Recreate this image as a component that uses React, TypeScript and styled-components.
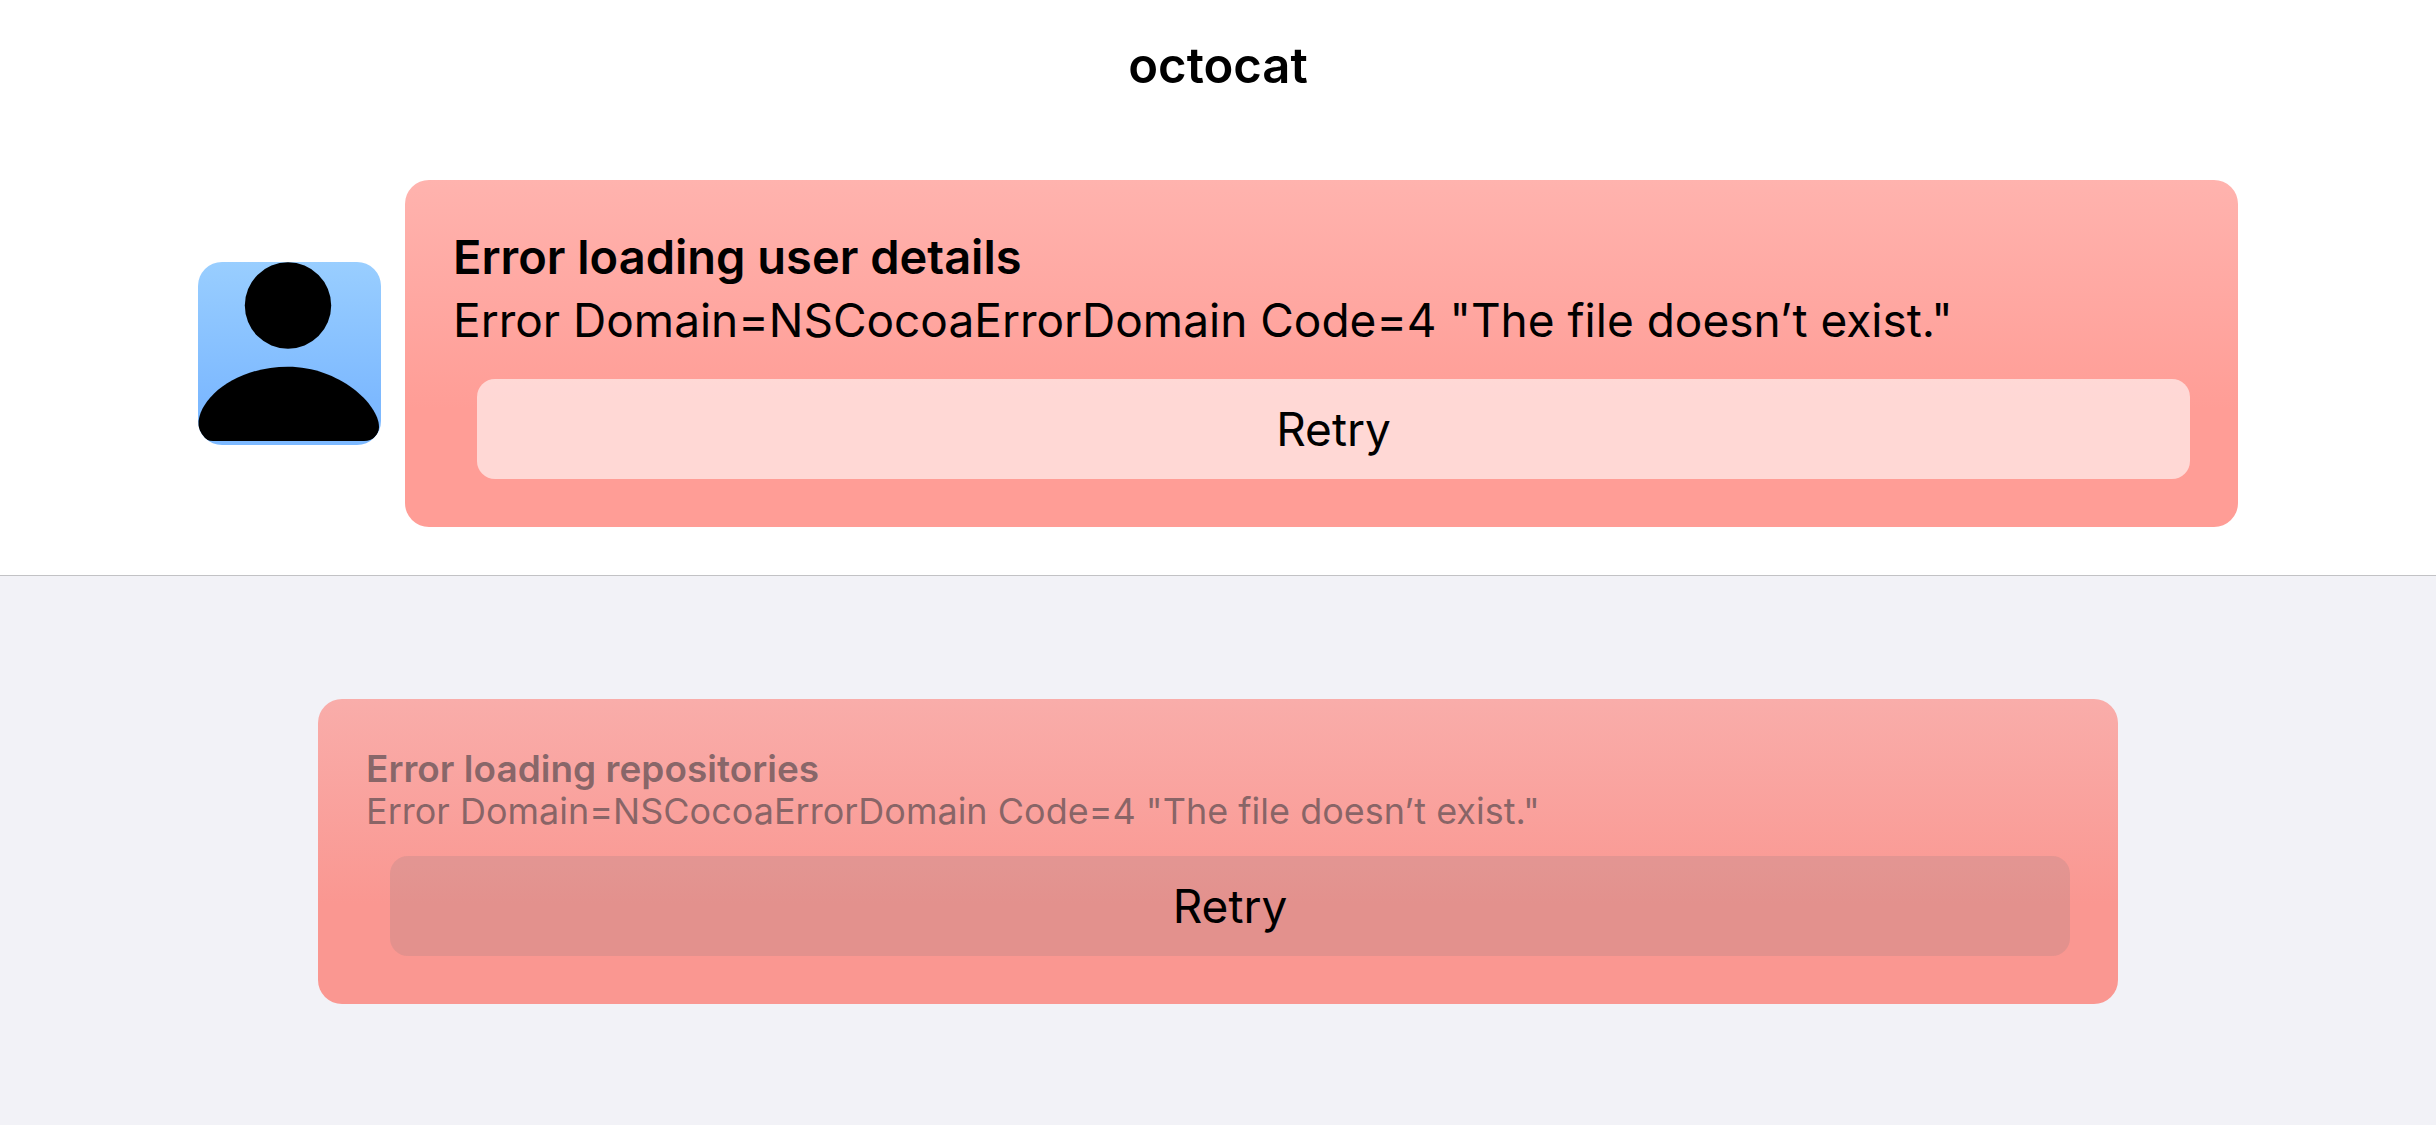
import React from "react";
import styled, { createGlobalStyle } from "styled-components";

const GlobalStyle = createGlobalStyle`
  *, *::before, *::after { box-sizing: border-box; }
  body {
    margin: 0;
    background: #f2f2f7;
    color: #000;
    font-family: Inter, "Liberation Sans", sans-serif;
  }
`;

const Header = styled.header`
  background: #fff;
  border-bottom: 1px solid #c2c2c5;
`;

const Title = styled.h1`
  margin: 0;
  font-size: 49px;
  line-height: 132px;
  font-weight: 600;
  text-align: center;
`;

const Profile = styled.section`
  display: flex;
  align-items: center;
  gap: 24px;
  padding: 48px 198px;
`;

const Avatar = styled.svg`
  flex: none;
  width: 183px;
  height: 183px;
  border-radius: 24px;
  background: linear-gradient(#99ceff, #7db9ff 75%);
`;

const Repositories = styled.main`
  padding: 123px 318px;
`;

type Size = "large" | "small";

const Card = styled.section<{ $size: Size }>`
  flex: 1;
  padding: 48px;
  border-radius: 24px;
  background: ${(p) =>
    p.$size === "large"
      ? "linear-gradient(#ffb3ae, #ff9d96 66%)"
      : "linear-gradient(#f9adaa, #fa9791 67%)"};
  color: ${(p) => (p.$size === "large" ? "#000" : "rgba(60, 60, 67, 0.6)")};
`;

const Message = styled.div<{ $size: Size }>`
  display: grid;
  gap: ${(p) => (p.$size === "large" ? "7px" : "0")};
  margin-bottom: ${(p) => (p.$size === "large" ? "30px" : "23px")};
  font-size: ${(p) => (p.$size === "large" ? "46px" : "36px")};
  line-height: ${(p) => (p.$size === "large" ? "57px" : "43px")};
`;

const Heading = styled.h2<{ $size: Size }>`
  margin: 0;
  font-size: ${(p) => (p.$size === "large" ? "47px" : "37px")};
  font-weight: 600;
`;

const Detail = styled.p`
  margin: 0;
`;

const RetryButton = styled.button<{ $size: Size }>`
  display: block;
  width: calc(100% - 24px);
  height: 100px;
  margin: 0 0 0 24px;
  padding: 0;
  border: 0;
  border-radius: 18px;
  background: ${(p) =>
    p.$size === "large" ? "rgba(255, 255, 255, 0.6)" : "rgba(120, 120, 128, 0.18)"};
  color: #000;
  font: inherit;
  font-size: 46px;
  line-height: 57px;
`;

function ErrorCard({ heading, size }: { heading: string; size: Size }) {
  return (
    <Card $size={size}>
      <Message $size={size}>
        <Heading $size={size}>{heading}</Heading>
        <Detail>Error Domain=NSCocoaErrorDomain Code=4 "The file doesn’t exist."</Detail>
      </Message>
      <RetryButton type="button" $size={size}>Retry</RetryButton>
    </Card>
  );
}

export default function App() {
  return (
    <>
      <GlobalStyle />
      <Header>
        <Title>octocat</Title>
        <Profile>
          <Avatar viewBox="0 0 183 183" role="img" aria-label="User avatar">
            <circle cx="90" cy="43.5" r="43.2" />
            <path d="M90 104.7C141 104.7 181 142 181 165C181 173 175 179 166 179H15C6 179 .3 171 .3 163C.3 136 38 104.7 90 104.7Z" />
          </Avatar>
          <ErrorCard heading="Error loading user details" size="large" />
        </Profile>
      </Header>
      <Repositories>
        <ErrorCard heading="Error loading repositories" size="small" />
      </Repositories>
    </>
  );
}
